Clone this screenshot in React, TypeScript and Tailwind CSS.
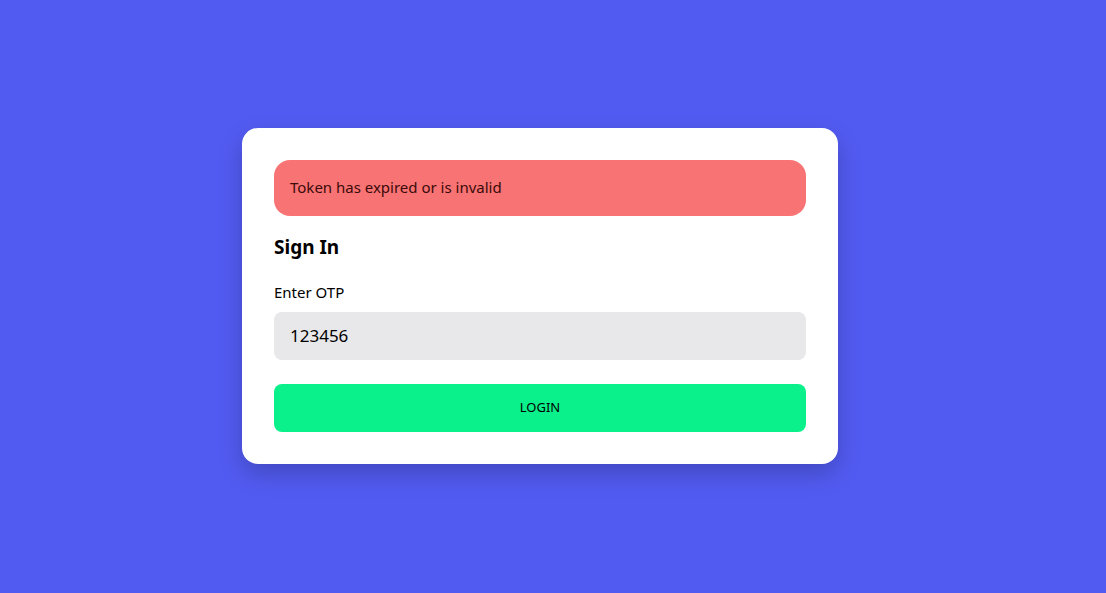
import React from "react";

export default function App() {
  return (
    <div
      className="min-h-[593px] w-full bg-[#525bf1] flex items-center justify-center pr-[26px] pb-[2px]"
      style={{ fontFamily: '"Noto Sans", sans-serif' }}
    >
      <div className="w-[596px] bg-white rounded-[16px] p-8 shadow-[0_10px_25px_rgba(0,0,0,0.2)]">
        <div className="bg-[#f87373] rounded-[16px] h-[56px] px-4 flex items-center text-[15px] text-[#3b0a0a]">
          Token has expired or is invalid
        </div>
        <h2 className="mt-[20px] text-[19px] font-bold text-black leading-[22px]">Sign In</h2>
        <label className="block mt-[23px] text-[15px] text-black leading-[22px]">Enter OTP</label>
        <div className="mt-[9px] h-[48px] rounded-[8px] bg-[#e8e8ea] px-4 flex items-center text-[17px] text-black">
          123456
        </div>
        <button className="mt-[24px] w-full h-[48px] rounded-[8px] bg-[#0af08a] text-[13px] text-black">
          LOGIN
        </button>
      </div>
    </div>
  );
}
